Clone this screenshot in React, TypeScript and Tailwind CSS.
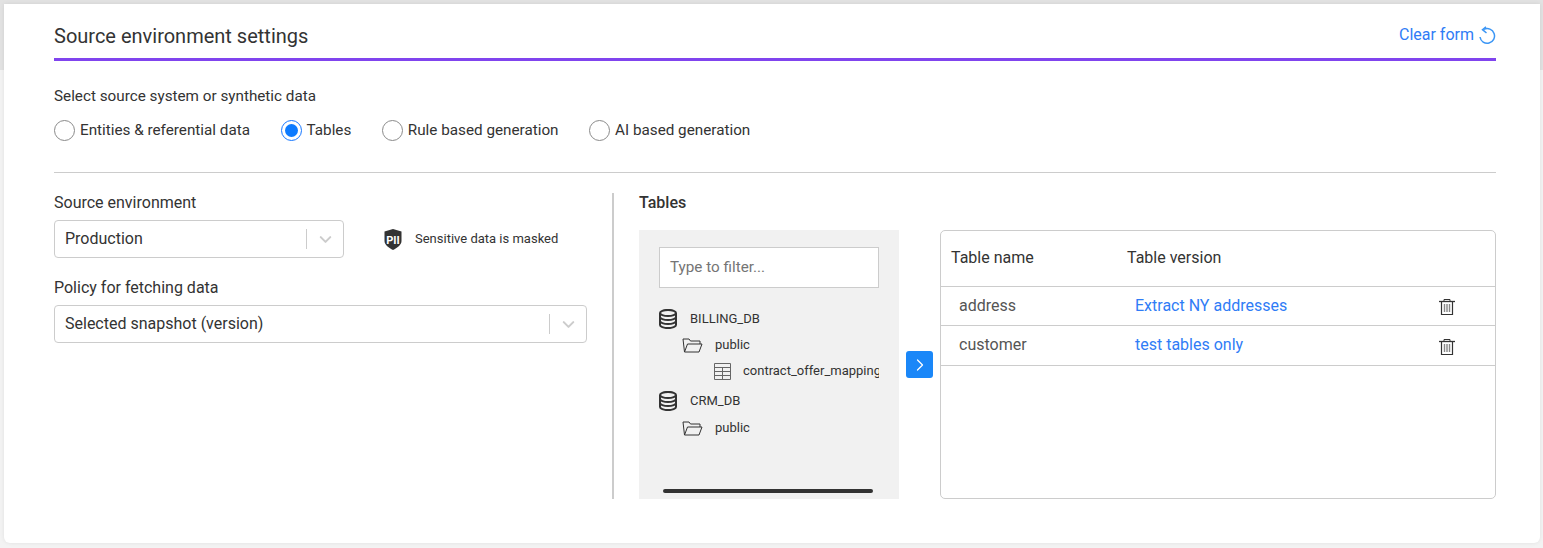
import { ChevronDown, ChevronRight } from 'lucide-react'

function Radio({ label, checked }: { label: string; checked?: boolean }) {
  return (
    <label className="flex items-center gap-[5px]">
      {checked ? (
        <span className="flex h-[21px] w-[21px] items-center justify-center rounded-full border border-[#1677ff] bg-white">
          <span className="h-[13px] w-[13px] rounded-full bg-[#0d7bff]" />
        </span>
      ) : (
        <span className="h-[21px] w-[21px] rounded-full border border-[#8a8a8a] bg-white" />
      )}
      <span>{label}</span>
    </label>
  )
}

function Select({ value, className }: { value: string; className: string }) {
  return (
    <div className={`flex h-[38px] items-center rounded border border-[#cccccc] bg-white pl-[10px] ${className}`}>
      <span className="flex-1">{value}</span>
      <span className="h-[20px] w-px bg-[#cccccc]" />
      <span className="flex w-[36px] justify-center">
        <ChevronDown size={19} strokeWidth={2.6} className="text-[#cccccc]" />
      </span>
    </div>
  )
}

function ClearIcon() {
  return (
    <svg width="17" height="19" viewBox="0 0 17 19" fill="none" stroke="#3b96f5" strokeWidth="1.500" className="shrink-0">
      <path d="M1 11a7.300 7.300 0 1 0 4-7.600" />
      <path d="M7 .8 3.500 3.700 7.500 7" />
    </svg>
  )
}

function DbIcon() {
  return (
    <svg width="18" height="20" viewBox="0 0 18 20" fill="none" stroke="#333" strokeWidth="2" className="shrink-0">
      <ellipse cx="9" cy="4" rx="8" ry="3.100" />
      <path d="M1 4v12c0 1.700 3.600 3.100 8 3.100s8-1.400 8-3.100V4" />
      <path d="M1 8c0 1.700 3.600 3.100 8 3.100s8-1.400 8-3.100" />
      <path d="M1 12c0 1.700 3.600 3.100 8 3.100s8-1.400 8-3.100" />
    </svg>
  )
}

function FolderIcon() {
  return (
    <svg width="21" height="16" viewBox="0 0 21 16" fill="none" stroke="#333" strokeWidth="1" className="shrink-0">
      <path d="M2.500 15 1 2h6l1.500 2H18v3" />
      <path d="M2.500 15 5.500 7H20l-3 8z" />
    </svg>
  )
}

function TableIcon() {
  return (
    <svg width="17" height="17" viewBox="0 0 17 17" fill="none" stroke="#666" strokeWidth="1" className="shrink-0">
      <path d="M.5.500h16v16H.5z" />
      <path d="M.5 4.500h16M.5 8.500h16M.5 12.500h16M8.500 4.500v12" />
    </svg>
  )
}

function TrashIcon() {
  return (
    <svg width="16" height="17" viewBox="0 0 16 17" fill="none" stroke="#333" strokeWidth="1">
      <path d="M0 3.500h16" strokeWidth="1.300" />
      <path d="M5 3V1.500h6V3" />
      <path d="M2.500 3.500v13h11v-13z" strokeWidth="1.200" />
      <path d="M5.500 6v8M8 6v8M10.500 6v8" stroke="#888" strokeWidth="1.400" />
    </svg>
  )
}

function PiiIcon() {
  return (
    <svg width="18" height="21" viewBox="0 0 18 21">
      <path d="M9 0 17.500 2.500V12C17.500 16 13 19 9 21 5 19 .5 16 .5 12V2.500z" fill="#333" />
      <text x="9" y="14.500" textAnchor="middle" fontSize="11" fontWeight="700" fontFamily="Roboto, sans-serif" fill="#fff">
        PII
      </text>
    </svg>
  )
}

function TableRow({ name, version, tall }: { name: string; version: string; tall?: boolean }) {
  return (
    <div className={`flex items-center border-b border-[#cccccc] ${tall ? 'h-[40px] pb-px' : 'h-[39px]'}`}>
      <span className="w-[176px] pl-[18px] text-[#555555]">{name}</span>
      <a className="flex-1 pl-[18px] text-[#2f7cf6]">{version}</a>
      <span className={`mr-[40px] flex w-[16px] ${tall ? 'mt-[2px]' : ''}`}>
        <TrashIcon />
      </span>
    </div>
  )
}

export default function App() {
  return (
    <div className="relative h-[548px] w-[1543px] overflow-hidden bg-[#f3f3f3] font-['Roboto',sans-serif] text-[16px] leading-[24px] text-[#333333]">
      {/* top band behind the card */}
      <div className="absolute inset-x-0 top-0 h-[70px] bg-[#e2e2e2]" />

      <div className="relative ml-[4px] mt-[4px] h-[539px] w-[1536px] rounded-b-[6px] bg-white pl-[50px] pr-[44px] shadow-[0_0_4px_rgba(0,0,0,0.08)]">
        <div className="flex h-[57px] items-start justify-between border-b-[3px] border-[#8044ee] pt-[18px]">
          <h1 className="text-[20px] leading-[28px]">Source environment settings</h1>
          <a className="mt-px flex items-center gap-[5px] text-[#2f7cf6]">
            Clear form
            <ClearIcon />
          </a>
        </div>

        <div className="h-[112px] border-b border-[#cccccc] pt-[23px] text-[15.25px]">
          <p>Select source system or synthetic data</p>
          <div className="mt-[10px] flex gap-[30.500px]">
            <Radio label="Entities & referential data" />
            <Radio label="Tables" checked />
            <Radio label="Rule based generation" />
            <Radio label="AI based generation" />
          </div>
        </div>

        <div className="mt-[20px] flex h-[306px]">
          <div className="w-[560px] border-r-2 border-[#cccccc]">
            <p className="mt-[-2px]">Source environment</p>
            <div className="mt-[5px] flex items-center">
              <Select value="Production" className="w-[290px]" />
              <span className="ml-[40px] flex items-center">
                <PiiIcon />
                <span className="ml-[13px] text-[13px]">Sensitive data is masked</span>
              </span>
            </div>
            <p className="mt-[18px]">Policy for fetching data</p>
            <div className="mt-[5px]">
              <Select value="Selected snapshot (version)" className="w-[533px]" />
            </div>
          </div>

          <div className="flex-1 pl-[25px]">
            <p className="mt-[-2px] font-medium">Tables</p>
            <div className="mt-[15px] flex h-[269px] items-stretch">
              <div className="relative w-[260px] bg-[#f1f1f1] px-[20px] pt-[17px] text-[13px] leading-[20px]">
                <div className="flex h-[41px] items-center border border-[#cccccc] bg-white pb-px pl-[10px] text-[15.25px] text-[#757575]">
                  Type to filter...
                </div>
                <div className="mt-[21px] overflow-hidden">
                  <div className="flex h-[20px] items-center gap-[13px]">
                    <DbIcon />
                    BILLING_DB
                  </div>
                  <div className="ml-[23px] mt-[6px] flex h-[20px] items-center gap-[12px]">
                    <FolderIcon />
                    public
                  </div>
                  <div className="ml-[55px] mt-[6px] flex h-[20px] items-center gap-[12px] whitespace-nowrap">
                    <TableIcon />
                    contract_offer_mapping
                  </div>
                  <div className="mt-[10px] flex h-[20px] items-center gap-[13px]">
                    <DbIcon />
                    CRM_DB
                  </div>
                  <div className="ml-[23px] mt-[7px] flex h-[20px] items-center gap-[12px]">
                    <FolderIcon />
                    public
                  </div>
                </div>
                <div className="absolute bottom-[6px] left-[24px] h-[4px] w-[210px] rounded-full bg-[#333333]" />
              </div>

              <div className="flex w-[41px] items-center justify-center">
                <button className="flex h-[27px] w-[27px] items-center justify-center rounded-[3px] bg-[#1a87f8]">
                  <ChevronRight size={20} strokeWidth={1.500} className="text-white" />
                </button>
              </div>

              <div className="flex-1 rounded-[5px] border border-[#cccccc]">
                <div className="flex h-[56px] items-center border-b border-[#cccccc] pb-px">
                  <span className="w-[176px] pl-[10px]">Table name</span>
                  <span className="pl-[10px]">Table version</span>
                </div>
                <TableRow name="address" version="Extract NY addresses" />
                <TableRow name="customer" version="test tables only" tall />
              </div>
            </div>
          </div>
        </div>
      </div>
    </div>
  )
}
